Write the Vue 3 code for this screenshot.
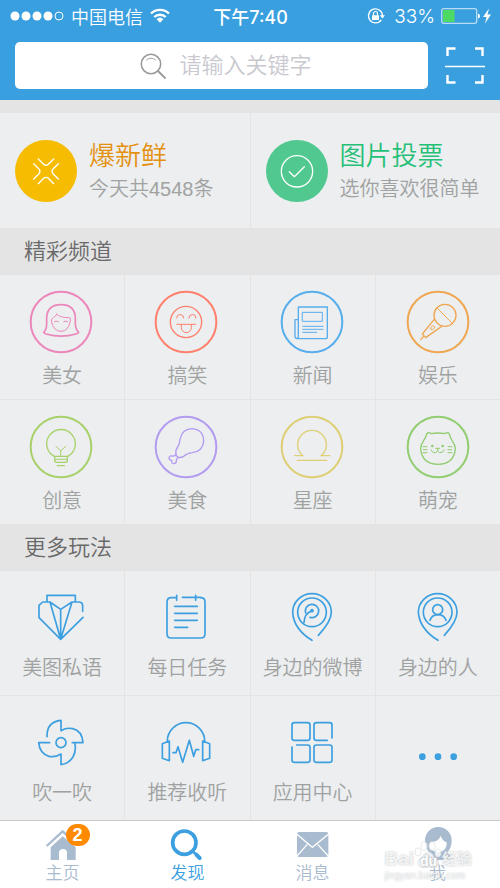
<script setup>
import { ref } from 'vue'

const ring = (cx, cy, r) =>
  `M${cx - r} ${cy}a${r} ${r} 0 1 0 ${r * 2} 0a${r} ${r} 0 1 0 ${-r * 2} 0Z`

const keyword = ref('')

const features = [
  { title: '爆新鲜', note: '今天共4548条', tone: 'fresh' },
  { title: '图片投票', note: '选你喜欢很简单', tone: 'vote' },
]

const channels = [
  {
    label: '美女', color: '#ec87bb', view: '90 60 192 192',
    paths: [
      { d: ring(183, 156, 91), w: 6 },
      { d: 'M131 187Q140 180 140 160V143Q142 104 183 104Q224 104 226 143V160Q226 178 236 187Q235 190 228 192Q183 205 138 192Q132 190 131 187Z', w: 5 },
      { d: 'M170 133Q180 143 207 143Q213 143 211 153Q205 184 183 184Q160 184 154 153Q153 146 161 142Q166 140 170 133Z', w: 3 },
      { d: 'M163 155q6-4 12 0M191 155q6-4 12 0', w: 3 },
    ],
  },
  {
    label: '搞笑', color: '#ff806d', view: '465 60 192 192',
    paths: [
      { d: ring(558, 156, 91), w: 6 },
      { d: ring(558, 156, 47), w: 4 },
      { d: 'M530 144a10 10 0 0 1 21 0M567 144a10 10 0 0 1 21 0M530 163H587M544 163V173a15 15 0 0 0 30 0V163', w: 3 },
    ],
  },
  {
    label: '新闻', color: '#58aeed', view: '90 60 192 192',
    paths: [
      { d: ring(183, 156, 91), w: 6 },
      { d: 'M142 149V111H229V200Q229 206 223 206H139Q132 206 132 199V149H142V198Q142 206 137 206', w: 4 },
      { d: 'M155 127H214V154H155ZM155 169H216M155 178H216M155 187H197', w: 3 },
    ],
  },
  {
    label: '娱乐', color: '#f0a753', view: '467 60 192 192',
    paths: [
      { d: ring(563, 156, 91), w: 6 },
      { d: ring(584, 136, 33), w: 4 },
      { d: 'M551 149L516 192L526 203L573 170M521 198L511 209', w: 4 },
      { d: 'M560 114L608 162M541 173L547 167L553 170V173L547 179L541 177Z', w: 3 },
    ],
  },
  {
    label: '创意', color: '#a8d16b', view: '90 45 192 192',
    paths: [
      { d: ring(183, 141, 91), w: 6 },
      { d: 'M164 170A43 43 0 1 1 202 170M164 169H202V181Q202 187 196 187H170Q164 187 164 181ZM172 197H193', w: 4 },
      { d: 'M168 139L182 153L197 139M182 153V169M164 178H202', w: 3 },
    ],
  },
  {
    label: '美食', color: '#b39cf0', view: '465 45 192 192',
    paths: [
      { d: ring(558, 141, 91), w: 6 },
      { d: 'M528 163Q525 152 533 141Q539 132 540 118Q547 86 577 86Q611 89 611 125Q607 155 577 158Q562 159 551 169Q543 174 536 172', w: 4 },
      { d: 'M528 163Q525 169 518 168Q508 166 507 174Q507 180 515 181Q514 191 523 191Q530 189 529 181Q529 175 536 172Q528 170 528 163Z', w: 4 },
    ],
  },
  {
    label: '星座', color: '#dece74', view: '90 45 192 192',
    paths: [
      { d: ring(183, 141, 91), w: 6 },
      { d: 'M131 167H156Q140 155 140 134A43 43 0 0 1 226 134Q226 155 210 167H236M139 181H227', w: 4 },
    ],
  },
  {
    label: '萌宠', color: '#92cd70', view: '467 45 192 192',
    paths: [
      { d: ring(563, 141, 91), w: 6 },
      { d: 'M528 104Q532 94 542 101Q563 97 584 101Q594 94 598 104Q599 113 605 121Q615 134 615 148Q610 192 563 193Q516 192 511 148Q511 134 520 121Q527 113 528 104Z', w: 4 },
      { d: 'M556 145H568M562 145V153Q557 161 549 157Q543 155 543 150M562 153Q567 161 575 157Q581 155 581 150M518 140H530M519 149H530M518 158H530M593 140H605M593 149H604M593 158H605', w: 3 },
      { d: ring(546, 138, 2) + ring(577, 138, 2), w: 4 },
    ],
  },
]

const blue = '#3c9fe0'

const extras = [
  {
    label: '美图私语', color: blue, view: '90 36 192 192',
    paths: [{ d: 'M141 95V76H226V95M182 208L117 143V106L128 96H150L182 118L216 96H238Q248 97 248 107V124M182 208L249 142M150 96L182 208L216 96M182 118V208', w: 5 }],
  },
  {
    label: '每日任务', color: blue, view: '465 36 192 192',
    paths: [{ d: 'M530 76V91M530 83H514Q501 83 501 96V191Q501 204 514 204H602Q615 204 615 191V96Q615 83 602 83M547 82H602M587 76V91M524 109H592M524 130H592M524 151H592M524 172H563', w: 5 }],
  },
  {
    label: '身边的微博', color: blue, view: '90 36 192 192',
    paths: [
      { d: 'M202 196Q241 155 241 127A58 56 0 0 0 125 127Q128 177 183 211', w: 5 },
      { d: ring(183, 127, 43), w: 5 },
      { d: 'M164 129A20 20 0 1 1 177 142M183 122Q160 130 159 158', w: 5 },
      { d: ring(183, 122, 3), w: 5 },
    ],
  },
  {
    label: '身边的人', color: blue, view: '467 36 192 192',
    paths: [
      { d: 'M582 196Q620 155 620 127A58 56 0 0 0 504 127Q508 177 563 211', w: 5 },
      { d: ring(562, 127, 43), w: 5 },
      { d: ring(562, 119, 15), w: 5 },
      { d: 'M539 151Q545 134 563 134Q581 134 587 151', w: 5 },
    ],
  },
  {
    label: '吹一吹', color: blue, view: '90 36 192 192',
    paths: [
      { d: ring(183, 143, 15), w: 5 },
      { d: 'M141 125Q140 80 183 76V107Q200 97 218 101Q246 107 249 143H217M224 143Q230 165 219 186Q206 207 183 209V177Q165 188 147 184Q119 176 116 143H149', w: 5 },
    ],
  },
  {
    label: '推荐收听', color: blue, view: '465 36 192 192',
    paths: [{ d: 'M502 138A56 55 0 0 1 614 138M487 146L508 138V197L487 190ZM608 138L629 146V190L608 197ZM519 173H528L534 155L548 202L568 136L581 184L587 164H596', w: 5 }],
  },
  {
    label: '应用中心', color: blue, view: '90 36 192 192',
    paths: [{ d: 'M130 83H170Q177 83 177 90V129Q177 136 170 136H130Q123 136 123 129V90Q123 83 130 83ZM243 129V90Q243 83 236 83H196Q189 83 189 90V129Q189 136 196 136H229M137 150H170Q177 150 177 157V195Q177 202 170 202H130Q123 202 123 195V156M196 150H236Q243 150 243 157V195Q243 202 236 202H196Q189 202 189 195V157Q189 150 196 150Z', w: 5 }],
  },
  {
    label: '', color: blue, view: '467 36 192 192',
    paths: [{ d: ring(516, 185, 5) + ring(563, 185, 5) + ring(610, 185, 5), w: 10 }],
  },
]

const sections = [
  { title: '精彩频道', items: channels, kind: 'channels' },
  { title: '更多玩法', items: extras, kind: 'extras' },
]
</script>

<template>
  <div class="page">
    <header class="top">
      <div class="status">
        <div class="carrier">
          <svg class="signal" viewBox="0 0 54 10" aria-hidden="true">
            <circle v-for="n in 4" :key="n" :cx="n * 11 - 6" cy="5" r="4.500" fill="#fff" />
            <circle cx="49" cy="5" r="4" fill="none" stroke="#fff" />
          </svg>
          <span>中国电信</span>
          <svg class="wifi" viewBox="0 0 20 16" aria-hidden="true">
            <g fill="none" stroke="#fff" stroke-width="2.400">
              <path d="M1 5.500A13 13 0 0 1 19 5.500" />
              <path d="M4.300 9A8.300 8.300 0 0 1 15.700 9" />
            </g>
            <path d="M6.600 11.200A5 5 0 0 1 13.400 11.200L10 14.800Z" fill="#fff" />
          </svg>
        </div>
        <time class="clock">下午7:40</time>
        <div class="power">
          <svg class="lock" viewBox="0 0 18 16" aria-hidden="true">
            <path d="M14.300 11.800A7 7 0 1 1 15.500 8" fill="none" stroke="#fff" stroke-width="1.300" />
            <path d="M12.800 7.300H18L15.400 10.600Z" fill="#fff" />
            <rect x="5" y="7.200" width="7" height="4.800" rx=".5" fill="#fff" />
            <path d="M6.500 7.500V5.500a2 2 0 0 1 4 0V7.500" fill="none" stroke="#fff" stroke-width="1.200" />
          </svg>
          <span class="percent">33%</span>
          <svg class="battery" viewBox="0 0 50 16" aria-hidden="true">
            <rect x=".7" y=".7" width="35" height="14.600" rx="2" fill="none" stroke="#b9dbf3" stroke-width="1.300" />
            <rect x="2" y="2" width="11.500" height="12" fill="#4cd964" />
            <path d="M37 5.500Q39 6 39 8T37 10.500Z" fill="#fff" />
            <path d="M48 0.500L42 9H45.500L44 15.500L50 6.500H46.500Z" fill="#fff" />
          </svg>
        </div>
      </div>
      <form class="search" @submit.prevent>
        <label class="box">
          <svg class="glass" viewBox="0 0 26 26" aria-hidden="true">
            <g fill="none" stroke="#999" stroke-linecap="round">
              <circle cx="11" cy="11" r="9.700" stroke-width="1.500" />
              <path d="M18 18L25 25" stroke-width="1.800" />
              <path d="M6.500 7Q11 3 15.500 7" stroke-width=".9" />
            </g>
          </svg>
          <input v-model="keyword" type="text" placeholder="请输入关键字" aria-label="请输入关键字" />
        </label>
        <button class="scan" type="button" aria-label="扫一扫">
          <svg viewBox="0 0 40 40" aria-hidden="true">
            <path d="M2.500 10V2.500H10.500M30 2.500H37.500V10M2.500 29V36.500H10.500M30 36.500H37.500V29" fill="none" stroke="#fff" stroke-width="2.400" />
            <path d="M0 20.500H40" stroke="#fff" stroke-width="1.700" />
          </svg>
        </button>
      </form>
    </header>

    <main>
      <div class="features">
        <a v-for="f in features" :key="f.title" href="#" class="feature" :class="f.tone">
          <svg class="medal" viewBox="0 0 186 186" aria-hidden="true">
            <circle class="disc" cx="93" cy="93" r="93" />
            <g fill="none" stroke="#fff" stroke-width="4" stroke-linecap="round" stroke-linejoin="round">
              <path v-if="f.tone === 'fresh'" d="M70 57L86 73Q93 79 100 73L116 57M56 71L72 87Q78 94 72 101L56 117M130 71L114 87Q108 94 114 101L130 117M70 131L86 115Q93 109 100 115L116 131" />
              <template v-else>
                <circle cx="93" cy="94" r="47" />
                <path d="M70 95L85 110L115 80" />
              </template>
            </g>
          </svg>
          <span class="words">
            <strong>{{ f.title }}</strong>
            <span>{{ f.note }}</span>
          </span>
        </a>
      </div>

      <section v-for="s in sections" :key="s.title">
        <h2>{{ s.title }}</h2>
        <div class="grid" :class="s.kind">
          <a v-for="(item, i) in s.items" :key="i" href="#" class="cell" :aria-label="item.label || '更多'">
            <svg class="icon" :viewBox="item.view" :stroke="item.color" aria-hidden="true">
              <path v-for="(p, k) in item.paths" :key="k" :d="p.d" :stroke-width="p.w" />
            </svg>
            <span v-if="item.label">{{ item.label }}</span>
          </a>
        </div>
      </section>
    </main>

    <nav class="tabs">
      <a href="#" class="tab">
        <span class="pic">
          <svg viewBox="136 399 102 102" aria-hidden="true">
            <path d="M138 453L186 409L210 431" fill="none" stroke="#a9bbcf" stroke-width="7" />
            <path d="M186 424L150 457V495H175V473Q175 462 187 462T199 473V495H225V457Z" fill="#a9bbcf" />
          </svg>
          <b class="badge">2</b>
        </span>
        <span>主页</span>
      </a>
      <a href="#" class="tab active" aria-current="page">
        <span class="pic">
          <svg viewBox="513 399 102 102" aria-hidden="true">
            <g fill="none" stroke="#3c9fe0" stroke-linecap="round">
              <circle cx="553" cy="443" r="35" stroke-width="11" />
              <path d="M580 471L587 477" stroke-width="7" />
              <path d="M589 479L599 489" stroke-width="12" />
            </g>
          </svg>
        </span>
        <span>发现</span>
      </a>
      <a href="#" class="tab">
        <span class="pic">
          <svg viewBox="138 399 102 102" aria-hidden="true">
            <rect x="141" y="411" width="94" height="75" rx="7" fill="#a9bbcf" />
            <path d="M140 417L187 457L236 417M141 483L172 448M235 483L203 448" fill="none" stroke="#fff" stroke-width="4" />
          </svg>
        </span>
        <span>消息</span>
      </a>
      <a href="#" class="tab">
        <span class="pic">
          <svg viewBox="511 399 102 102" aria-hidden="true">
            <path d="M563 396A40 40 0 0 1 603 437Q603 458 589 474Q602 478 602 495H518Q518 480 537 474Q523 458 523 437A40 40 0 0 1 563 396Z" fill="#a9bbcf" />
            <path d="M537 450Q541 441 549 440Q566 436 570 422Q575 437 588 442Q590 470 563 472Q540 470 537 450Z" fill="#fff" />
          </svg>
        </span>
        <span>我</span>
      </a>
      <div class="mark">
        <div class="brand">
          <span>Bai</span>
          <svg viewBox="0 0 28 28" aria-hidden="true">
            <g fill="#fff" fill-opacity=".8" stroke="#dde0e4" stroke-width=".7">
              <ellipse cx="4" cy="11" rx="3" ry="4" />
              <ellipse cx="10" cy="5" rx="3" ry="4.300" />
              <ellipse cx="18" cy="5" rx="3" ry="4.300" />
              <ellipse cx="24" cy="12" rx="3" ry="4" />
              <path d="M14 11Q18 11 20 16Q26 20 24 24Q22 28 14 26Q6 28 4 24Q2 20 8 16Q10 11 14 11Z" />
            </g>
            <text x="6" y="25">du</text>
          </svg>
          <span class="cn">经验</span>
        </div>
        <div class="site">jingyan.baidu.com</div>
      </div>
    </nav>
  </div>
</template>

<style>
body {
  background: #e4e4e4;
}
</style>

<style scoped>
.page {
  font-family: "Liberation Sans", "Noto Sans CJK SC", sans-serif;
  font-weight: 350;
  color: #a0a2a1;
  background: #e4e4e4;
}
a {
  color: inherit;
  text-decoration: none;
}
svg {
  display: block;
  flex: none;
  overflow: visible;
}
.top {
  background: #3a9fdf;
  color: #fff;
}
.status {
  display: grid;
  grid-template-columns: 1fr auto 1fr;
  align-items: center;
  height: 32px;
  padding: 0 9px 0 10px;
  font-size: 18px;
}
.carrier,
.power {
  display: flex;
  align-items: center;
}
.carrier {
  gap: 7px;
}
.power {
  justify-content: flex-end;
  gap: 6px;
}
.signal {
  width: 54px;
  height: 10px;
}
.wifi {
  width: 20px;
  height: 16px;
}
.lock {
  width: 18px;
  height: 16px;
}
.battery {
  width: 50px;
  height: 16px;
}
.clock {
  font-weight: 500;
  font-family: Inter, "Noto Sans CJK SC", sans-serif;
}
.percent {
  font-family: Inter, sans-serif;
  font-size: 19px;
  font-weight: 300;
  margin-left: 3px;
}
.search {
  display: flex;
  align-items: center;
  gap: 17px;
  padding: 10px 15px 11px;
}
.box {
  flex: 1;
  display: flex;
  align-items: center;
  justify-content: center;
  gap: 14px;
  height: 47px;
  padding-left: 10px;
  box-sizing: border-box;
  border-radius: 5px;
  background: #fff;
}
.glass {
  width: 26px;
  height: 26px;
}
.box input {
  width: 134px;
  padding: 0;
  border: 0;
  outline: 0;
  appearance: none;
  background: none;
  font: inherit;
  font-size: 22px;
  color: #666;
}
.box input::placeholder {
  color: #c9c9cf;
  opacity: 1;
}
.scan {
  padding: 0;
  border: 0;
  background: none;
}
.scan svg {
  width: 40px;
  height: 40px;
}
.features {
  display: grid;
  grid-template-columns: 1fr 1fr;
  gap: 1px;
  padding-top: 13px;
}
.feature {
  display: flex;
  align-items: center;
  gap: 12px;
  height: 115px;
  padding-left: 15px;
  background: #eceef0;
}
.medal {
  width: 62px;
  height: 62px;
}
.fresh .disc {
  fill: #f5bc02;
}
.vote .disc {
  fill: #50c890;
}
.words {
  display: flex;
  flex-direction: column;
  font-size: 20px;
  line-height: 30px;
  white-space: nowrap;
}
.words strong {
  font-size: 26px;
  line-height: 36px;
  font-weight: 350;
}
.fresh strong {
  color: #e59110;
}
.vote strong {
  color: #25c077;
}
h2 {
  margin: 0;
  padding-left: 24px;
  font-size: 22px;
  line-height: 47px;
  font-weight: 350;
  color: #696969;
}
.grid {
  display: grid;
  grid-template-columns: repeat(4, 1fr);
  gap: 1px;
}
.cell {
  display: flex;
  flex-direction: column;
  align-items: center;
  height: 124px;
  box-sizing: border-box;
  padding-top: 15px;
  background: #eceef0;
  font-size: 20px;
  line-height: 45px;
  white-space: nowrap;
}
.extras .cell {
  padding-top: 11px;
}
.icon {
  width: 64px;
  height: 64px;
  fill: none;
  stroke-linecap: round;
  stroke-linejoin: round;
}
.tabs {
  position: relative;
  display: grid;
  grid-template-columns: repeat(4, 1fr);
  border-top: 1px solid #c9c9c9;
  background: #fff;
}
.tab {
  display: flex;
  flex-direction: column;
  align-items: center;
  padding: 7px 0 3px;
  font-size: 17px;
  line-height: 23px;
  color: #a9bbcf;
}
.tab.active {
  color: #3c9fe0;
}
.pic {
  position: relative;
}
.pic svg {
  width: 34px;
  height: 34px;
}
.badge {
  position: absolute;
  top: -4px;
  left: 20px;
  width: 24px;
  border-radius: 11px;
  background: #ff8a00;
  color: #fff;
  font-size: 18px;
  font-weight: 700;
  line-height: 22px;
  text-align: center;
}
.mark {
  position: absolute;
  right: 28px;
  bottom: 5px;
  pointer-events: none;
  color: rgba(255, 255, 255, 0.8);
  text-shadow: 0 0 2px #b4b8bc;
  font-weight: 700;
}
.brand {
  display: flex;
  align-items: flex-end;
  font-size: 19px;
  line-height: 20px;
}
.brand svg {
  width: 28px;
  height: 28px;
}
.brand text {
  font-size: 14px;
  fill: #fff;
  stroke: #dde0e4;
  stroke-width: 1px;
  paint-order: stroke;
}
.cn {
  font-size: 15px;
}
.site {
  font-size: 10px;
  line-height: 14px;
  font-weight: 400;
}
</style>
